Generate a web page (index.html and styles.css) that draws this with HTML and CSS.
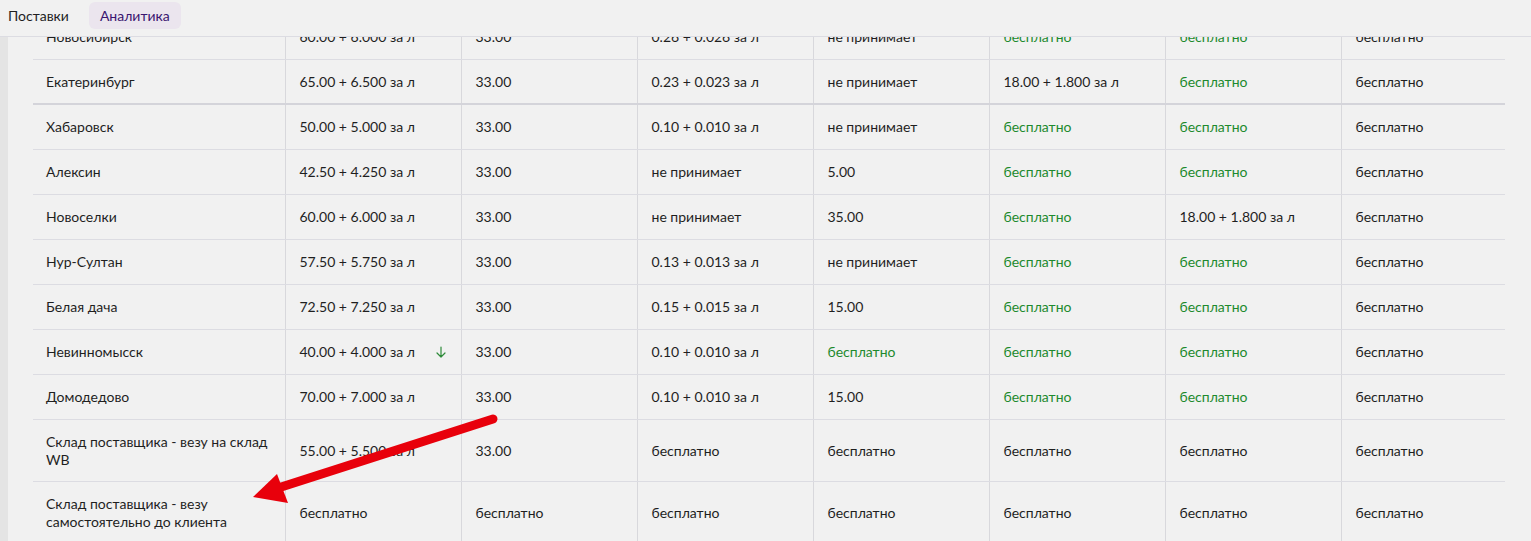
FILE: index.html
```html
<!DOCTYPE html>
<html lang="ru">
<head>
    <meta charset="UTF-8">
    <meta name="viewport" content="width=device-width, initial-scale=1.0">
    <title>Аналитика — тарифы складов</title>
    <link rel="stylesheet" href="styles.css">
</head>
<body>

<header class="topbar">
    <a class="tab">Поставки</a>
    <a class="tab active">Аналитика</a>
</header>

<div class="page">
    <div class="rail"></div>
    <main class="content">
        <table class="tariffs">
            <colgroup>
                <col class="col-name">
                <col class="col-value">
                <col class="col-value">
                <col class="col-value">
                <col class="col-value">
                <col class="col-value">
                <col class="col-value">
                <col class="col-last">
            </colgroup>
            <tbody>
                <tr>
                    <td>Новосибирск</td>
                    <td>60.00 + 6.000 за л</td>
                    <td>33.00</td>
                    <td>0.26 + 0.026 за л</td>
                    <td>не принимает</td>
                    <td class="free">бесплатно</td>
                    <td class="free">бесплатно</td>
                    <td>бесплатно</td>
                </tr>
                <tr class="thick">
                    <td>Екатеринбург</td>
                    <td>65.00 + 6.500 за л</td>
                    <td>33.00</td>
                    <td>0.23 + 0.023 за л</td>
                    <td>не принимает</td>
                    <td>18.00 + 1.800 за л</td>
                    <td class="free">бесплатно</td>
                    <td>бесплатно</td>
                </tr>
                <tr>
                    <td>Хабаровск</td>
                    <td>50.00 + 5.000 за л</td>
                    <td>33.00</td>
                    <td>0.10 + 0.010 за л</td>
                    <td>не принимает</td>
                    <td class="free">бесплатно</td>
                    <td class="free">бесплатно</td>
                    <td>бесплатно</td>
                </tr>
                <tr>
                    <td>Алексин</td>
                    <td>42.50 + 4.250 за л</td>
                    <td>33.00</td>
                    <td>не принимает</td>
                    <td>5.00</td>
                    <td class="free">бесплатно</td>
                    <td class="free">бесплатно</td>
                    <td>бесплатно</td>
                </tr>
                <tr>
                    <td>Новоселки</td>
                    <td>60.00 + 6.000 за л</td>
                    <td>33.00</td>
                    <td>не принимает</td>
                    <td>35.00</td>
                    <td class="free">бесплатно</td>
                    <td>18.00 + 1.800 за л</td>
                    <td>бесплатно</td>
                </tr>
                <tr>
                    <td>Нур-Султан</td>
                    <td>57.50 + 5.750 за л</td>
                    <td>33.00</td>
                    <td>0.13 + 0.013 за л</td>
                    <td>не принимает</td>
                    <td class="free">бесплатно</td>
                    <td class="free">бесплатно</td>
                    <td>бесплатно</td>
                </tr>
                <tr>
                    <td>Белая дача</td>
                    <td>72.50 + 7.250 за л</td>
                    <td>33.00</td>
                    <td>0.15 + 0.015 за л</td>
                    <td>15.00</td>
                    <td class="free">бесплатно</td>
                    <td class="free">бесплатно</td>
                    <td>бесплатно</td>
                </tr>
                <tr>
                    <td>Невинномысск</td>
                    <td>
                        <div class="with-trend">
                            <span>40.00 + 4.000 за л</span>
                            <svg class="trend" width="10" height="12" viewBox="0 0 10 12">
                                <path d="M5 1v10M1 7l4 4 4-4" fill="none" stroke="#2e8b3a" stroke-width="1.2" stroke-linecap="round" stroke-linejoin="round"/>
                            </svg>
                        </div>
                    </td>
                    <td>33.00</td>
                    <td>0.10 + 0.010 за л</td>
                    <td class="free">бесплатно</td>
                    <td class="free">бесплатно</td>
                    <td class="free">бесплатно</td>
                    <td>бесплатно</td>
                </tr>
                <tr>
                    <td>Домодедово</td>
                    <td>70.00 + 7.000 за л</td>
                    <td>33.00</td>
                    <td>0.10 + 0.010 за л</td>
                    <td>15.00</td>
                    <td class="free">бесплатно</td>
                    <td class="free">бесплатно</td>
                    <td>бесплатно</td>
                </tr>
                <tr class="tall">
                    <td>Склад поставщика - везу на склад WB</td>
                    <td>55.00 + 5.500 за л</td>
                    <td>33.00</td>
                    <td>бесплатно</td>
                    <td>бесплатно</td>
                    <td>бесплатно</td>
                    <td>бесплатно</td>
                    <td>бесплатно</td>
                </tr>
                <tr class="tall">
                    <td>Склад поставщика - везу самостоятельно до клиента</td>
                    <td>бесплатно</td>
                    <td>бесплатно</td>
                    <td>бесплатно</td>
                    <td>бесплатно</td>
                    <td>бесплатно</td>
                    <td>бесплатно</td>
                    <td>бесплатно</td>
                </tr>
            </tbody>
        </table>
    </main>
</div>

<!-- annotation drawn over the screenshot -->
<svg class="annotation" width="1531" height="541" viewBox="0 0 1531 541">
    <line x1="493" y1="419" x2="275" y2="489" stroke="#e8000b" stroke-width="9" stroke-linecap="round"/>
    <polygon points="253,497 277,474 288,503" fill="#e8000b"/>
</svg>

</body>
</html>
```

FILE: styles.css
```css
body {
    margin: 0;
    background: #f1f1f1;
    font-family: Lato, "Noto Sans", sans-serif;
    font-size: 14px;
    color: #1f1f1f;
}
.topbar {
    position: fixed;
    top: 0;
    left: 0;
    right: 0;
    height: 37px;
    border-bottom: 1px solid #dcdce2;
    background: #f1f1f1;
    display: flex;
    align-items: flex-start;
    gap: 20px;
    padding: 2px 0 0 8px;
    box-sizing: border-box;
    z-index: 2;
}
.tab {
    display: block;
    height: 27px;
    line-height: 27px;
    color: #1f1f1f;
    font-size: 14px;
}
.tab.active {
    padding: 0 11px;
    border-radius: 6px;
    background: #ebe5ee;
    color: #3a1670;
}
.page {
    display: flex;
    min-height: 541px;
}
.rail {
    width: 8px;
    flex: none;
    background: #e4e4e4;
}
.content {
    flex: 1;
    padding: 15px 0 0 25px;
}
.tariffs {
    border-collapse: collapse;
    table-layout: fixed;
    width: 1472px;
}
.col-name {
    width: 252px;
}
.col-value {
    width: 176px;
}
.col-last {
    width: 164px;
}
.tariffs td {
    padding: 13px 14px;
    line-height: 18px;
    border-bottom: 1px solid #dcdce2;
    border-left: 1px solid #d8d8dc;
    vertical-align: middle;
    text-align: left;
}
.tariffs td:first-child {
    border-left: none;
    padding-left: 13px;
}
.tariffs tr.thick td {
    padding-bottom: 12px;
    border-bottom: 2px solid #d4d4da;
}
.tariffs tr.tall td {
    padding-top: 12.5px;
    padding-bottom: 12.5px;
}
.free {
    color: #1e8a2e;
}
.with-trend {
    display: flex;
    justify-content: space-between;
    align-items: center;
}
.trend {
    display: block;
    margin-right: 1px;
}
.annotation {
    position: absolute;
    top: 0;
    left: 0;
    pointer-events: none;
    z-index: 3;
}
```
